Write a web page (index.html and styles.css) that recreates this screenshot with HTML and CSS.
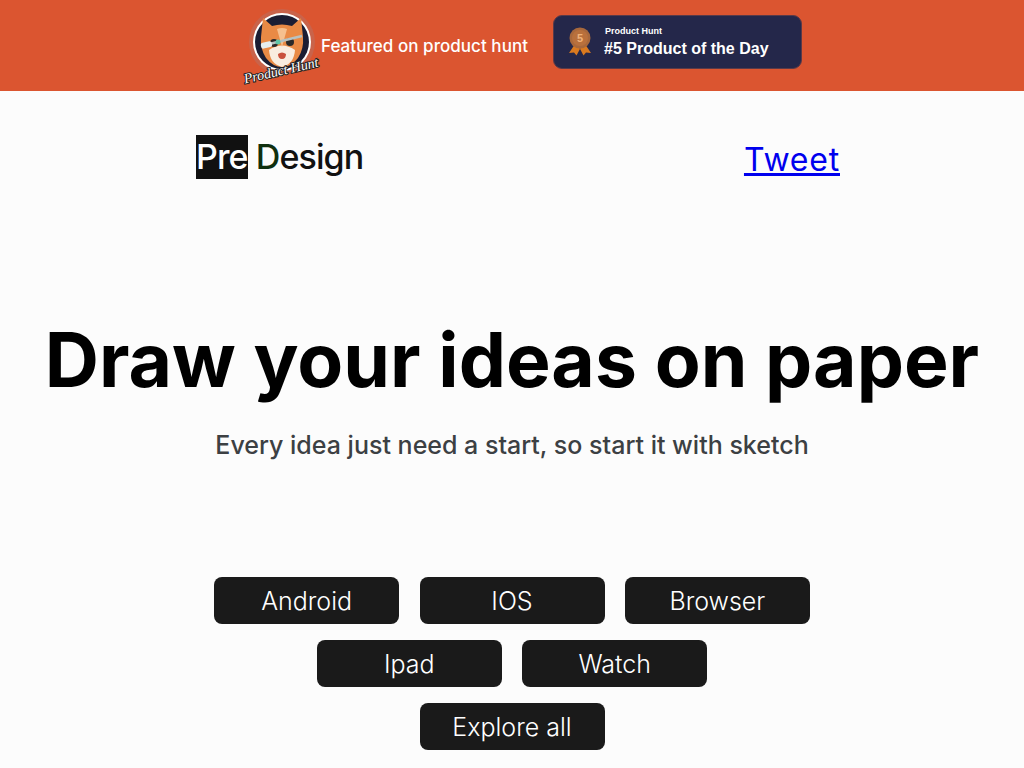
FILE: index.html
```html
<!DOCTYPE html>
<html lang="en">
<head>
  <meta charset="UTF-8">
  <title>PreDesign</title>
  <link rel="stylesheet" href="styles.css">
</head>
<body>
  <div class="banner">
    <svg class="cat" width="78" height="82" viewBox="0 0 78 82">
      <circle cx="38" cy="37" r="33" fill="#c9634a"/>
      <circle cx="38" cy="37" r="29" fill="#fff"/>
      <circle cx="38" cy="37" r="27" fill="#1b1d33"/>
      <path d="M19 13 L28 21 Q38 18 48 21 L57 13 L59 32 Q60 44 54 53 Q47 62 38 62 Q29 62 22 53 Q16 44 17 32Z" fill="#e98a45"/>
      <path d="M25 45 Q38 36 51 45 Q50 59 38 62 Q26 59 25 45Z" fill="#f9ecdf"/>
      <path d="M33 24 L38 42 L43 24 Q38 22 33 24Z" fill="#f6c08e"/>
      <circle cx="30" cy="38" r="4" fill="#2a2a2a"/>
      <circle cx="46" cy="37" r="4" fill="#2a2a2a"/>
      <path d="M17 41 L58 31" stroke="#b8c2c0" stroke-width="2.5"/>
      <rect x="17" y="37" width="11" height="6" rx="2" fill="#e6eeee" transform="rotate(-12 22 40)"/>
      <circle cx="34" cy="37" r="2.5" fill="#5fc7a8"/>
      <path d="M34 49 Q38 46 42 49 Q42 54 38 54 Q34 54 34 49Z" fill="#c9503c"/>
      <text x="38" y="70" class="cat-text" transform="rotate(-13 38 70)">Product Hunt</text>
    </svg>
    <span class="banner-text">Featured on product hunt</span>
    <div class="ph-badge">
      <svg width="24" height="29" viewBox="0 0 24 29">
        <path d="M7 17 L1 26 L6 25.5 L8.5 28.5 L13 20Z M17 17 L23 26 L18 25.5 L15.5 28.5 L11 20Z" fill="#d9791f"/>
        <circle cx="12" cy="11" r="10.5" fill="#a8683c"/>
        <circle cx="12" cy="11" r="8" fill="#b9703c"/>
        <text x="12" y="15" class="medal-num">5</text>
      </svg>
      <div class="ph-text">
        <div class="ph-small">Product Hunt</div>
        <div class="ph-big">#5 Product of the Day</div>
      </div>
    </div>
  </div>

  <header class="nav">
    <div class="logo"><span class="logo-pre">Pre</span> <span class="logo-design"><span class="logo-d">D</span>esign</span></div>
    <a class="tweet" href="#">Tweet</a>
  </header>

  <section class="hero">
    <h1>Draw your ideas on paper</h1>
    <p>Every idea just need a start, so start it with sketch</p>
  </section>

  <div class="platforms">
    <div class="platform-row">
      <button>Android</button>
      <button>IOS</button>
      <button>Browser</button>
    </div>
    <div class="platform-row">
      <button>Ipad</button>
      <button>Watch</button>
    </div>
    <div class="platform-row">
      <button>Explore all</button>
    </div>
  </div>
</body>
</html>
```

FILE: styles.css
```css
:root {
  --bg: #fcfcfc;
  --orange: #db5530;
  --dark: #1a1a1a;
}

html, body {
  height: 768px;
  overflow: hidden;
}

body {
  margin: 0;
  background: var(--bg);
  font-family: "Inter", "Noto Sans", sans-serif;
}

.banner {
  height: 91px;
  background: var(--orange);
  display: flex;
  align-items: center;
  justify-content: center;
  padding-left: 22px;
  box-sizing: border-box;
}

.cat {
  margin-right: -1px;
  flex: none;
  overflow: visible;
}

.cat-text {
  font-family: "Liberation Serif", serif;
  font-style: italic;
  font-size: 14px;
  fill: #fff;
  stroke: #222;
  stroke-width: 2px;
  paint-order: stroke;
  text-anchor: middle;
}

.banner-text {
  color: #fff;
  font-size: 17px;
  font-weight: 500;
  letter-spacing: 0.05px;
  margin-right: 25px;
}

.ph-badge {
  width: 249px;
  height: 54px;
  margin-top: -8px;
  box-sizing: border-box;
  background: #24274a;
  border: 1px solid #5a3a48;
  border-radius: 9px;
  display: flex;
  align-items: center;
  gap: 12px;
  padding: 0 14px;
  color: #fff;
  font-family: "Liberation Sans", sans-serif;
}

.ph-small {
  font-size: 9px;
  font-weight: 700;
  margin: 1px 0 4px 1px;
}

.ph-big {
  font-size: 16px;
  font-weight: 700;
}

.medal-num {
  font-family: "Liberation Sans", sans-serif;
  font-size: 11px;
  font-weight: 700;
  fill: #f0b27a;
  text-anchor: middle;
}

.nav {
  display: flex;
  justify-content: space-between;
  align-items: center;
  padding: 43px 184px 0 196px;
}

.logo {
  font-size: 34px;
  font-weight: 500;
  letter-spacing: -0.9px;
  color: #111;
}

.logo-pre {
  background: #111;
  color: #fff;
  padding: 1px 0 2px;
}

.logo-d {
  color: #10300f;
}

.tweet {
  font-size: 32px;
  letter-spacing: 0.8px;
  color: #0000ee;
  margin-top: 6px;
}

.hero {
  text-align: center;
  margin-top: 136px;
}

.hero h1 {
  margin: 0;
  font-size: 75px;
  font-weight: 700;
  color: #000;
  line-height: 90px;
}

.hero p {
  margin: 25px 0 0;
  font-size: 25px;
  font-weight: 500;
  color: #3c4043;
}

.platforms {
  display: flex;
  flex-direction: column;
  gap: 16px;
  margin-top: 117px;
}

.platform-row {
  display: flex;
  justify-content: center;
  gap: 20.4px;
}

.platforms button {
  width: 185px;
  height: 47px;
  border: none;
  border-radius: 8px;
  background: var(--dark);
  color: #fff;
  font-family: inherit;
  font-size: 25px;
  font-weight: 300;
}
```
